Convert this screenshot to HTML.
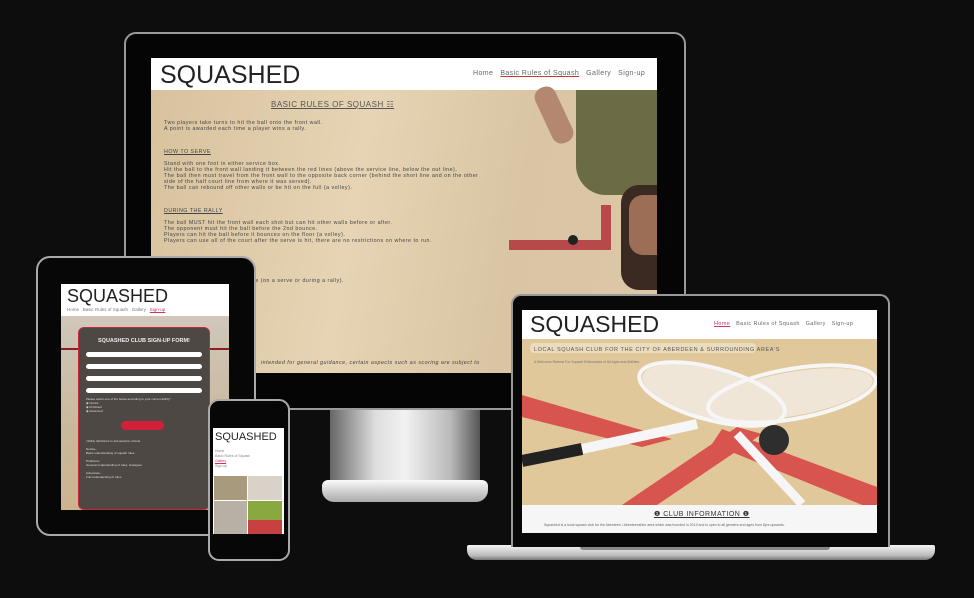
<!DOCTYPE html>
<html><head><meta charset="utf-8"><style>
*{margin:0;padding:0;box-sizing:border-box}
body{width:974px;height:598px;background:#0d0d0d;position:relative;overflow:hidden;font-family:"Liberation Sans",sans-serif}
.a{position:absolute}
.wood{background:linear-gradient(100deg,#d8c29e,#e6d4b4 40%,#d9c5a3 70%,#dcc8a6)}
.logo{font-weight:300;color:#222;letter-spacing:0}
.nav{color:#666;font-size:7px;letter-spacing:.4px}
.t{font-size:5.3px;color:#444;line-height:6px;letter-spacing:.5px}
</style></head><body>

<!-- Monitor -->
<div class="a" style="left:330px;top:405px;width:150px;height:80px;background:linear-gradient(90deg,#666,#ddd 30%,#f2f2f2 50%,#bbb 80%,#555)"></div>
<div class="a" style="left:322px;top:480px;width:166px;height:22px;border-radius:6px 6px 12px 12px;background:linear-gradient(180deg,#fafafa,#aaa)"></div>
<div class="a" style="left:124px;top:32px;width:562px;height:378px;border-radius:12px;background:#050505;border:2px solid #9a9a9a"></div>
<div class="a" style="left:151px;top:58px;width:506px;height:315px;background:#fff;overflow:hidden">
  <div class="a logo" style="left:9px;top:3px;font-size:25px">SQUASHED</div>
  <div class="a nav" style="left:322px;top:12px">Home&nbsp;&nbsp;&nbsp;<span style="text-decoration:underline;text-decoration-color:#c33">Basic Rules of Squash</span>&nbsp;&nbsp;&nbsp;Gallery&nbsp;&nbsp;&nbsp;Sign-up</div>
  <div class="a wood" style="left:0;top:32px;width:506px;height:283px">
    <div class="a" style="left:120px;top:10px;font-size:8px;color:#555;text-decoration:underline;letter-spacing:.5px">BASIC RULES OF SQUASH ☷</div>
    <div class="a t" style="left:13px;top:30px">Two players take turns to hit the ball onto the front wall.<br>A point is awarded each time a player wins a rally.</div>
    <div class="a t" style="left:13px;top:59px;text-decoration:underline">HOW TO SERVE</div>
    <div class="a t" style="left:13px;top:71px">Stand with one foot in either service box.<br>Hit the ball to the front wall landing it between the red lines (above the service line, below the out line).<br>The ball then must travel from the front wall to the opposite back corner (behind the short line and on the other<br>side of the half court line from where it was served).<br>The ball can rebound off other walls or be hit on the full (a volley).</div>
    <div class="a t" style="left:13px;top:118px;text-decoration:underline">DURING THE RALLY</div>
    <div class="a t" style="left:13px;top:130px">The ball MUST hit the front wall each shot but can hit other walls before or after.<br>The opponent must hit the ball before the 2nd bounce.<br>Players can hit the ball before it bounces on the floor (a volley).<br>Players can use all of the court after the serve is hit, there are no restrictions on where to run.</div>
    <div class="a t" style="left:13px;top:188px">&nbsp;&nbsp;&nbsp;&nbsp;&nbsp;&nbsp;&nbsp;&nbsp;&nbsp;&nbsp;&nbsp;&nbsp;&nbsp;&nbsp;&nbsp;&nbsp;&nbsp;&nbsp;&nbsp;&nbsp;&nbsp;&nbsp;&nbsp;&nbsp;&nbsp;&nbsp;&nbsp;&nbsp;&nbsp;&nbsp;&nbsp;&nbsp;&nbsp;&nbsp;&nbsp;&nbsp;&nbsp;&nbsp;urt line (on a serve or during a rally).</div>
    <div class="a t" style="left:110px;top:270px;font-style:italic">intended for general guidance, certain aspects such as scoring are subject to</div>
    <div class="a" style="left:358px;top:150px;width:98px;height:10px;background:#b8494a"></div>
    <div class="a" style="left:450px;top:115px;width:10px;height:45px;background:#b8494a"></div>
    <div class="a" style="left:417px;top:145px;width:10px;height:10px;border-radius:50%;background:#222"></div>
    <div class="a" style="left:425px;top:0;width:81px;height:105px;background:#6b6b45;border-radius:0 0 0 30px"></div>
    <div class="a" style="left:392px;top:-5px;width:22px;height:60px;background:#b48770;transform:rotate(-25deg);border-radius:10px"></div>
    <div class="a" style="left:470px;top:95px;width:36px;height:105px;background:#3a2a22;border-radius:18px 0 0 18px"></div>
    <div class="a" style="left:478px;top:105px;width:28px;height:60px;background:#9c6e55;border-radius:14px 0 0 14px"></div>
  </div>
</div>

<!-- Tablet -->
<div class="a" style="left:36px;top:256px;width:220px;height:280px;border-radius:14px;background:#070707;border:2px solid #aaa"></div>
<div class="a" style="left:61px;top:284px;width:168px;height:226px;background:#fff;overflow:hidden">
  <div class="a logo" style="left:6px;top:2px;font-size:18px">SQUASHED</div>
  <div class="a" style="left:6px;top:23px;font-size:4.5px;color:#777">Home&nbsp;&nbsp;&nbsp;Basic Rules of Squash&nbsp;&nbsp;&nbsp;Gallery&nbsp;&nbsp;&nbsp;<span style="color:#c36;text-decoration:underline">Sign-up</span></div>
  <div class="a" style="left:0;top:32px;width:168px;height:194px;background:linear-gradient(180deg,#d0c7bb,#c9b89b 60%,#cdb48e)"></div>
  <div class="a" style="left:0;top:64px;width:168px;height:2px;background:#8b2020"></div>
  <div class="a" style="left:17px;top:43px;width:132px;height:183px;background:#4e4844;border:1px solid #c4283a;border-radius:6px"></div>
  <div class="a" style="left:37px;top:54px;font-size:5.5px;color:#eee;font-weight:bold">SQUASHED CLUB SIGN-UP FORM!</div>
  <div class="a" style="left:25px;top:68px;width:116px;height:5px;background:#fff;border-radius:3px"></div>
  <div class="a" style="left:25px;top:80px;width:116px;height:5px;background:#fff;border-radius:3px"></div>
  <div class="a" style="left:25px;top:92px;width:116px;height:5px;background:#fff;border-radius:3px"></div>
  <div class="a" style="left:25px;top:104px;width:116px;height:5px;background:#fff;border-radius:3px"></div>
  <div class="a" style="left:25px;top:113px;font-size:3px;color:#ddd;line-height:4px">Please select one of the below according to your current ability*:<br>◉ Novice<br>◉ Proficient<br>◉ Advanced</div>
  <div class="a" style="left:60px;top:137px;width:43px;height:9px;background:#d0203a;border-radius:5px"></div>
  <div class="a" style="left:25px;top:155px;width:110px;height:55px;font-size:3px;color:#ddd;line-height:4px">"Ability definitions to aid selection criteria<br><br>Novice~<br>Basic understanding of squash rules<br><br>Proficient~<br>General understanding of rules, strategies<br><br>Advanced~<br>Full understanding of rules</div>
</div>

<!-- Phone -->
<div class="a" style="left:208px;top:399px;width:82px;height:162px;border-radius:11px;background:#070707;border:2px solid #aaa"></div>
<div class="a" style="left:213px;top:428px;width:71px;height:106px;background:#fff;overflow:hidden">
  <div class="a logo" style="left:2px;top:3px;font-size:11px">SQUASHED</div>
  <div class="a" style="left:2px;top:21px;font-size:3.5px;color:#888;line-height:5px">Home<br>Basic Rules of Squash<br><span style="color:#c36;text-decoration:underline">Gallery</span><br>Sign-up</div>
  <div class="a" style="left:1px;top:48px;width:33px;height:24px;background:#a89a7c"></div>
  <div class="a" style="left:35px;top:48px;width:34px;height:24px;background:#d8d2c8"></div>
  <div class="a" style="left:1px;top:73px;width:33px;height:33px;background:#b8b0a4"></div>
  <div class="a" style="left:35px;top:73px;width:34px;height:33px;background:#8aa840"></div>
  <div class="a" style="left:35px;top:92px;width:34px;height:14px;background:#c84040"></div>
</div>

<!-- Laptop -->
<div class="a" style="left:467px;top:545px;width:468px;height:15px;border-radius:2px 2px 10px 10px;background:linear-gradient(180deg,#f5f5f5,#bbb 70%,#777)"></div>
<div class="a" style="left:511px;top:294px;width:379px;height:253px;border-radius:10px 10px 0 0;background:#080808;border:2px solid #999;border-bottom:none"></div>
<div class="a" style="left:522px;top:310px;width:355px;height:223px;background:#fff;overflow:hidden">
  <div class="a logo" style="left:8px;top:1px;font-size:23px">SQUASHED</div>
  <div class="a" style="left:192px;top:11px;font-size:5.5px;color:#666;letter-spacing:.4px"><span style="color:#c36;text-decoration:underline">Home</span>&nbsp;&nbsp;&nbsp;Basic Rules of Squash&nbsp;&nbsp;&nbsp;Gallery&nbsp;&nbsp;&nbsp;Sign-up</div>
  <svg class="a" style="left:0;top:29px" width="355" height="166" viewBox="0 0 355 166">
    <rect width="355" height="166" fill="#e1c89b"/>
    <polygon points="0,56 0,78 120,108 150,100" fill="#d8544e"/>
    <polygon points="100,166 135,166 240,95 215,88" fill="#d8544e"/>
    <polygon points="200,90 355,148 355,172 190,105" fill="#d8544e"/>
    <ellipse cx="190" cy="55" rx="72" ry="24" fill="#efe6d8" transform="rotate(15 190 55)"/>
    <ellipse cx="270" cy="55" rx="82" ry="22" fill="#efe6d8" transform="rotate(-10 270 55)"/>
    <ellipse cx="190" cy="55" rx="75" ry="26" fill="none" stroke="#f6f6f6" stroke-width="4" transform="rotate(15 190 55)"/>
    <ellipse cx="270" cy="55" rx="85" ry="25" fill="none" stroke="#f6f6f6" stroke-width="4" transform="rotate(-10 270 55)"/>
    <path d="M60,110 L175,85" stroke="#f6f6f6" stroke-width="10"/>
    <path d="M0,122 L60,110" stroke="#222" stroke-width="12"/>
    <path d="M215,95 L280,165" stroke="#f6f6f6" stroke-width="9"/>
    <circle cx="252" cy="101" r="15" fill="#2e2e2e"/>
    <rect x="8" y="4" width="226" height="10" rx="4" fill="#f0e4cc" opacity=".7"/>
    <text x="12" y="12" font-size="5.5" fill="#555" font-family="Liberation Sans" letter-spacing=".6">LOCAL SQUASH CLUB FOR THE CITY OF ABERDEEN &amp; SURROUNDING AREA'S</text>
    <text x="12" y="24" font-size="3.5" fill="#777" font-family="Liberation Sans">A Welcome Retreat For Squash Enthusiasts of All Ages and Abilities</text>
  </svg>
  <div class="a" style="left:0;top:195px;width:355px;height:28px;background:#f6f6f6"></div>
  <div class="a" style="left:132px;top:200px;font-size:7px;color:#333;text-decoration:underline;letter-spacing:.5px">❶ CLUB INFORMATION ❶</div>
  <div class="a" style="left:22px;top:213px;font-size:3.5px;color:#666">Squashed is a local squash club for the Aberdeen / Aberdeenshire area which was founded in 2019 and is open to all genders and ages from 8yrs upwards.</div>
</div>
<div class="a" style="left:580px;top:547px;width:250px;height:3px;background:#888;border-radius:0 0 4px 4px"></div>
</body></html>
